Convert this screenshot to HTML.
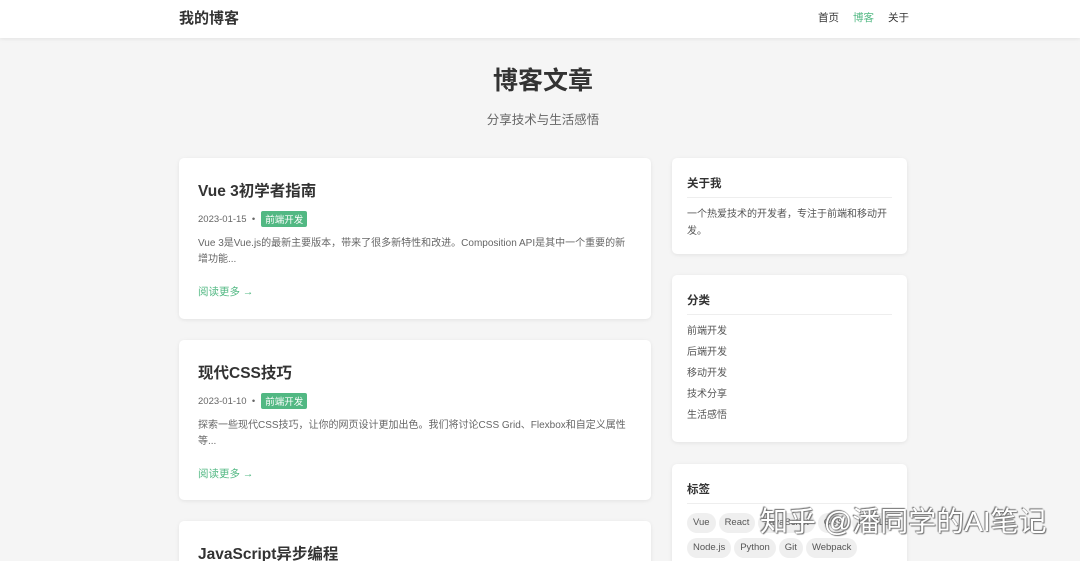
<!DOCTYPE html>
<html><head><meta charset="utf-8"><style>
*{margin:0;padding:0;box-sizing:border-box}
html,body{width:1080px;height:561px;overflow:hidden}
body{background:#f5f5f5;font-family:"Liberation Sans","Noto Sans CJK SC",sans-serif;color:#333;position:relative}
.hdr{position:absolute;left:0;top:0;width:1080px;height:38px;background:#fff;box-shadow:0 1px 4px rgba(0,0,0,.08)}
.logo{position:absolute;left:179px;top:7px;font-size:15px;font-weight:bold;color:#333}
.nav{position:absolute;top:10px;font-size:10.5px;color:#333}
h1{position:absolute;top:61px;left:0;width:1086px;text-align:center;font-size:25px;font-weight:bold;color:#333}
.sub{position:absolute;top:109px;left:0;width:1086px;text-align:center;font-size:12.5px;color:#666}
.card{position:absolute;background:#fff;border-radius:5px;box-shadow:0 1px 4px rgba(0,0,0,.08)}
.post{left:179px;width:472px;padding:0 20px}
.post h2{position:absolute;left:19px;top:21px;font-size:15.5px;font-weight:bold;color:#333}
.meta{position:absolute;left:19px;top:53px;font-size:9.5px;color:#666;display:flex;align-items:center}
.tag{background:#52b883;color:#fff;padding:1px 4px;border-radius:2px;margin-left:6px;font-size:9.5px}
.ex{position:absolute;left:19px;right:22px;top:78px;font-size:10px;line-height:16px;color:#666}
.more{position:absolute;left:19px;top:126px;font-size:10.5px;color:#52b883}
.side{left:672px;width:235px}
.side h3{position:absolute;left:15px;top:17px;font-size:11.5px;font-weight:bold;color:#333}
.side .ln{position:absolute;left:15px;right:15px;top:39px;border-top:1px solid #eee}
.side .t{position:absolute;left:15px;right:8px;font-size:10px;color:#555;line-height:17px}
.pill{display:inline-block;background:#efefef;border-radius:10px;padding:0 6px;height:20px;line-height:20px;font-size:9.5px;color:#555;margin:0 3px 5px 0}
.wm{position:absolute;left:760px;top:500px;font-size:28px;color:#fff;text-shadow:0 0 1px #555,1px 1px 1px #777,-1px -1px 1px #777;white-space:nowrap}
</style></head><body>
<div class="hdr"><div class="logo">我的博客</div>
<div class="nav" style="left:818px">首页</div><div class="nav" style="left:853px;color:#52b883">博客</div><div class="nav" style="left:888px">关于</div></div>
<h1>博客文章</h1>
<div class="sub">分享技术与生活感悟</div>

<div class="card post" style="top:158px;height:161px">
<h2>Vue 3初学者指南</h2>
<div class="meta">2023-01-15 &nbsp;•<span class="tag">前端开发</span></div>
<div class="ex">Vue 3是Vue.js的最新主要版本，带来了很多新特性和改进。Composition API是其中一个重要的新增功能...</div>
<div class="more">阅读更多 →</div></div>

<div class="card post" style="top:340px;height:160px">
<h2>现代CSS技巧</h2>
<div class="meta">2023-01-10 &nbsp;•<span class="tag">前端开发</span></div>
<div class="ex">探索一些现代CSS技巧，让你的网页设计更加出色。我们将讨论CSS Grid、Flexbox和自定义属性等...</div>
<div class="more">阅读更多 →</div></div>

<div class="card post" style="top:521px;height:60px">
<h2>JavaScript异步编程</h2></div>

<div class="card side" style="top:158px;height:96px">
<h3>关于我</h3><div class="ln"></div>
<div class="t" style="top:48px">一个热爱技术的开发者，专注于前端和移动开发。</div></div>

<div class="card side" style="top:275px;height:167px">
<h3>分类</h3><div class="ln"></div>
<div class="t" style="top:46px;line-height:21px">前端开发<br>后端开发<br>移动开发<br>技术分享<br>生活感悟</div></div>

<div class="card side" style="top:464px;height:120px">
<h3>标签</h3><div class="ln"></div>
<div class="t" style="top:49px;white-space:nowrap"><span class="pill">Vue</span><span class="pill">React</span><span class="pill">JavaScript</span><span class="pill">CSS</span><span class="pill">HTML5</span><br><span class="pill">Node.js</span><span class="pill">Python</span><span class="pill">Git</span><span class="pill">Webpack</span></div></div>

<div class="wm">知乎 @潘同学的AI笔记</div>
</body></html>
